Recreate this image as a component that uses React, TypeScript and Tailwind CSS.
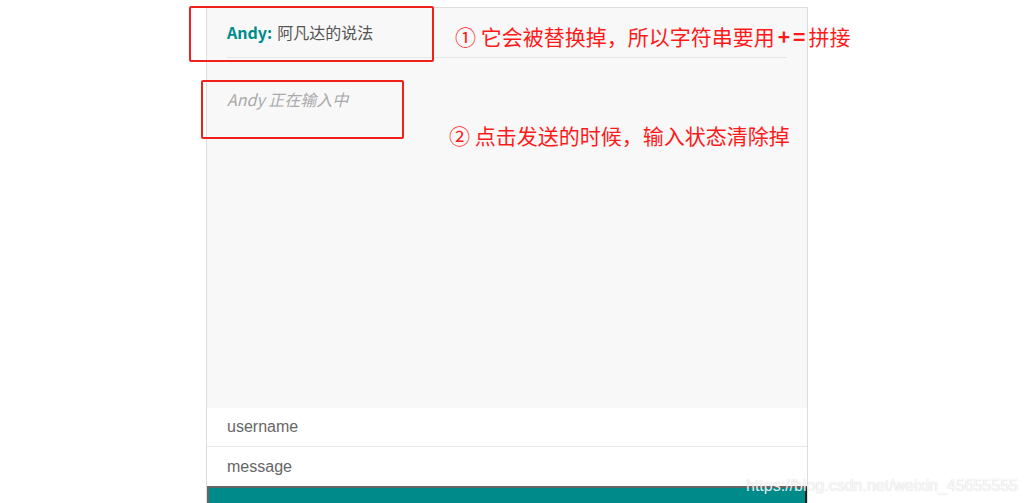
const cjk = '"Noto Sans CJK SC", "Noto Sans", sans-serif';

function Annotation({ children, className }: { children: React.ReactNode; className: string }) {
  return (
    <p
      className={`absolute whitespace-nowrap text-[21px] leading-none text-[#ff1a1a] ${className}`}
      style={{ fontFamily: cjk }}
    >
      {children}
    </p>
  );
}

export default function App() {
  return (
    <div className="relative h-[503px] w-[1026px] overflow-hidden bg-white">
      <div className="ml-[206px] mt-[7px] w-[602px] border border-[#dddddd]">
        <div className="h-[400px] bg-[#f8f8f8] px-5">
          <div
            className="flex h-[50px] items-center border-b border-[#e6e6e6] pb-[2px]"
            style={{ fontFamily: cjk }}
          >
            <span className="text-[16px] font-bold text-[#008b8b]">Andy:</span>
            <span className="ml-[5px] text-[16px] text-[#555]">阿凡达的说法</span>
          </div>
          <p
            className="mt-[31px] text-[16px] italic leading-5 text-[#aaaaaa]"
            style={{ fontFamily: cjk }}
          >
            Andy 正在输入中
          </p>
        </div>
        <div className="bg-white" style={{ fontFamily: '"Liberation Sans", Arial, sans-serif' }}>
          <div className="flex h-[39px] items-center border-b border-[#e8e8e8] px-5 text-[16px] text-[#666]">
            username
          </div>
          <div className="flex h-[39px] items-center px-5 text-[16px] text-[#666]">message</div>
        </div>
        <div className="h-[40px] border-2 border-[#666] border-r-[#222] bg-[#008b8b]" />
      </div>

      {/* annotation overlays */}
      <div className="absolute left-[189px] top-[6px] h-[56px] w-[245px] rounded-[2px] border-2 border-[#f0201a]" />
      <div className="absolute left-[201px] top-[80px] h-[59px] w-[203px] rounded-[2px] border-2 border-[#f0201a]" />
      <Annotation className="left-[455px] top-[26px]">
        ① 它会被替换掉，所以字符串要用<span className="ml-[3px] font-semibold">+</span>
        <span className="mx-[3px] font-semibold">=</span>拼接
      </Annotation>
      <Annotation className="left-[449px] top-[125px]">② 点击发送的时候，输入状态清除掉</Annotation>

      <p
        className="absolute left-[746px] top-[474px] whitespace-nowrap text-[16px] text-white/90"
        style={{ fontFamily: '"Liberation Sans", Arial, sans-serif', textShadow: '0 0 1px rgba(0,0,0,0.25)' }}
      >
        https://blog.csdn.net/weixin_45655555
      </p>
    </div>
  );
}
